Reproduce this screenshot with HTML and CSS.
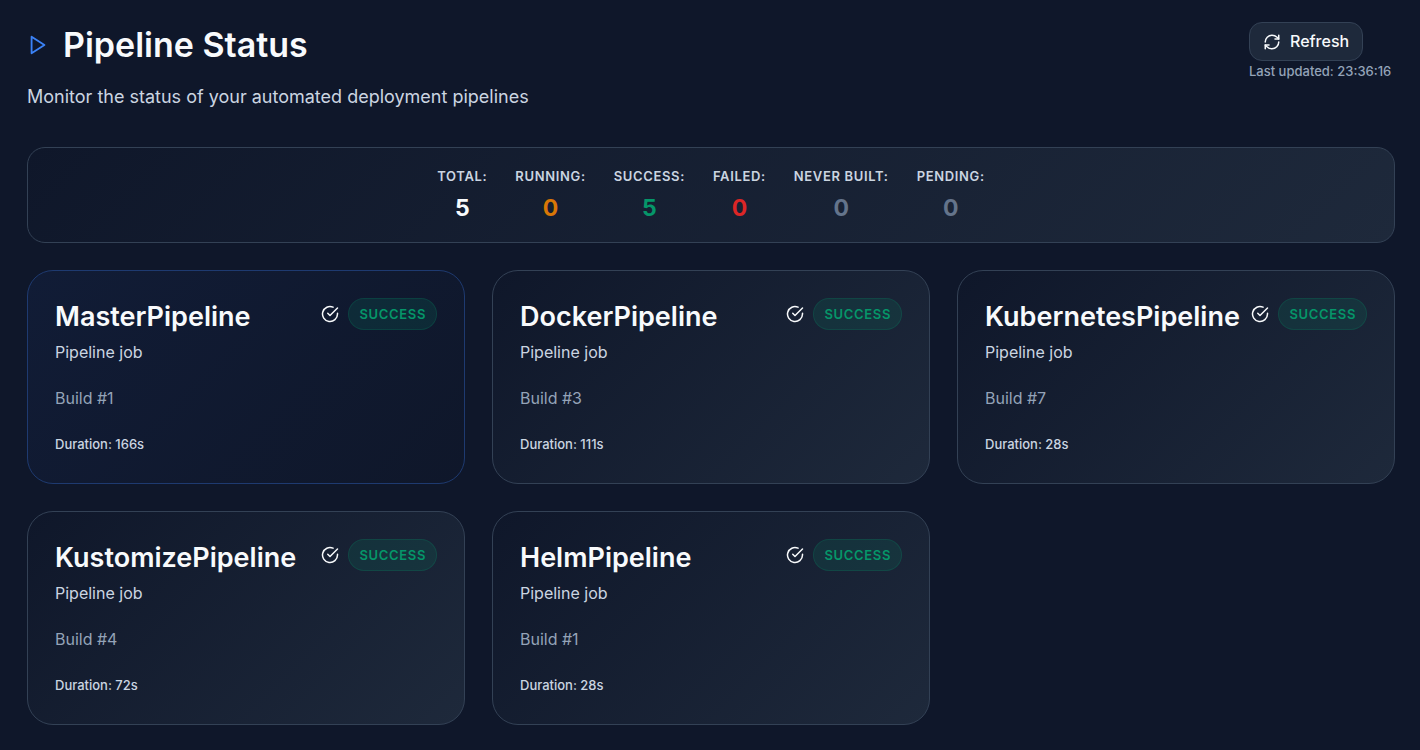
FILE: index.html
```html
<!DOCTYPE html>
<html lang="en">
<head>
<meta charset="utf-8">
<meta name="viewport" content="width=device-width, initial-scale=1">
<title>Pipeline Status</title>
<link rel="stylesheet" href="styles.css">
</head>
<body>
<svg class="sprite" aria-hidden="true">
  <symbol id="check" viewBox="0 0 24 24"><path d="M22 11.08V12a10 10 0 1 1-5.93-9.14"/><path d="m9 11 3 3L22 4"/></symbol>
</svg>
<main class="page">
  <header class="header">
    <div class="heading">
      <h1 class="title">
        <svg class="title-icon" viewBox="0 0 24 24" aria-hidden="true"><path d="M5 3l14 9-14 9z"/></svg>
        Pipeline Status
      </h1>
      <p class="subtitle">Monitor the status of your automated deployment pipelines</p>
    </div>
    <div class="actions">
      <button class="refresh" type="button">
        <svg class="icon" viewBox="0 0 24 24" aria-hidden="true"><path d="M3 12a9 9 0 0 1 9-9 9.75 9.75 0 0 1 6.74 2.74L21 8"/><path d="M21 3v5h-5"/><path d="M21 12a9 9 0 0 1-9 9 9.75 9.75 0 0 1-6.74-2.74L3 16"/><path d="M8 16H3v5"/></svg>
        Refresh
      </button>
      <span class="updated">Last updated: 23:36:16</span>
    </div>
  </header>

  <dl class="stats">
    <div class="stat"><dt class="stat-label">Total:</dt><dd class="stat-value">5</dd></div>
    <div class="stat"><dt class="stat-label">Running:</dt><dd class="stat-value running">0</dd></div>
    <div class="stat"><dt class="stat-label">Success:</dt><dd class="stat-value success">5</dd></div>
    <div class="stat"><dt class="stat-label">Failed:</dt><dd class="stat-value failed">0</dd></div>
    <div class="stat"><dt class="stat-label">Never built:</dt><dd class="stat-value muted">0</dd></div>
    <div class="stat"><dt class="stat-label">Pending:</dt><dd class="stat-value muted">0</dd></div>
  </dl>

  <section class="grid" aria-label="Pipelines">
    <article class="card master">
      <div class="card-head">
        <div><h2 class="name">MasterPipeline</h2><p class="kind">Pipeline job</p></div>
        <div class="status"><svg class="icon" aria-hidden="true"><use href="#check"/></svg><span class="badge">Success</span></div>
      </div>
      <p class="build">Build #1</p>
      <p class="duration">Duration: 166s</p>
    </article>
    <article class="card">
      <div class="card-head">
        <div><h2 class="name">DockerPipeline</h2><p class="kind">Pipeline job</p></div>
        <div class="status"><svg class="icon" aria-hidden="true"><use href="#check"/></svg><span class="badge">Success</span></div>
      </div>
      <p class="build">Build #3</p>
      <p class="duration">Duration: 111s</p>
    </article>
    <article class="card">
      <div class="card-head">
        <div><h2 class="name">KubernetesPipeline</h2><p class="kind">Pipeline job</p></div>
        <div class="status"><svg class="icon" aria-hidden="true"><use href="#check"/></svg><span class="badge">Success</span></div>
      </div>
      <p class="build">Build #7</p>
      <p class="duration">Duration: 28s</p>
    </article>
    <article class="card">
      <div class="card-head">
        <div><h2 class="name">KustomizePipeline</h2><p class="kind">Pipeline job</p></div>
        <div class="status"><svg class="icon" aria-hidden="true"><use href="#check"/></svg><span class="badge">Success</span></div>
      </div>
      <p class="build">Build #4</p>
      <p class="duration">Duration: 72s</p>
    </article>
    <article class="card">
      <div class="card-head">
        <div><h2 class="name">HelmPipeline</h2><p class="kind">Pipeline job</p></div>
        <div class="status"><svg class="icon" aria-hidden="true"><use href="#check"/></svg><span class="badge">Success</span></div>
      </div>
      <p class="build">Build #1</p>
      <p class="duration">Duration: 28s</p>
    </article>
  </section>
</main>
</body>
</html>
```
FILE: styles.css
```css
* { box-sizing: border-box; margin: 0; padding: 0; }

body {
  background: #0f172a;
  color: #f8fafc;
  font-family: Inter, sans-serif;
  font-size: 16px;
  line-height: 24px;
}

.sprite { display: none; }

.page { padding: 22px 25px 26px 27px; }

.header {
  display: flex;
  justify-content: space-between;
  align-items: flex-start;
  margin-bottom: 37px;
}

.title {
  display: flex;
  align-items: center;
  gap: 14px;
  font-size: 34px;
  font-weight: 600;
  line-height: 46px;
}

.title-icon, .icon {
  flex: none;
  fill: none;
  stroke: currentColor;
  stroke-width: 2;
  stroke-linecap: round;
  stroke-linejoin: round;
}

.title-icon { width: 22px; height: 22px; color: #3b82f6; }
.icon { width: 18px; height: 18px; }

.subtitle {
  margin-top: 15px;
  color: #cbd5e1;
  font-size: 18px;
  line-height: 27px;
}

.actions { display: flex; flex-direction: column; align-items: flex-start; min-width: 146px; }

.refresh {
  display: flex;
  align-items: center;
  gap: 9px;
  padding: 7px 13px;
  border: 1px solid #334155;
  border-radius: 13px;
  background: #1e293b;
  color: #f8fafc;
  font: 500 16px/23px Inter, sans-serif;
  cursor: pointer;
}

.updated { color: #94a3b8; font-size: 13px; font-weight: 500; line-height: 20px; }

.stats {
  display: flex;
  flex-wrap: wrap;
  justify-content: center;
  gap: 28px;
  padding: 17px 26px;
  margin-bottom: 27px;
  border: 1px solid #334155;
  border-radius: 18px;
  background: linear-gradient(135deg, #0f172a, #1e293b);
}

.stat { text-align: center; }

.stat-label {
  color: #cbd5e1;
  font-size: 13px;
  font-weight: 600;
  line-height: 22px;
  letter-spacing: 0.05em;
  text-transform: uppercase;
  margin-bottom: 5px;
}

.stat-value { font-size: 23px; font-weight: 700; line-height: 33px; }
.running { color: #d97706; }
.success { color: #059669; }
.failed { color: #dc2626; }
.muted { color: #64748b; }

.grid { display: grid; grid-template-columns: repeat(3, 1fr); gap: 27px; }

.card {
  padding: 27px;
  border: 1px solid #334155;
  border-radius: 26px;
  background: linear-gradient(135deg, #0f172a, #1e293b);
}

.card.master {
  border-color: #1e3a70;
  background: linear-gradient(135deg, #111c36, #0f172a);
}

.card-head { display: flex; justify-content: space-between; align-items: flex-start; margin-bottom: 22px; }

.name { font-size: 27px; font-weight: 600; line-height: 38px; }
.kind { color: #cbd5e1; font-size: 16px; line-height: 24px; margin-top: 4px; }

.status { display: flex; align-items: center; gap: 9px; }

.badge {
  padding: 4px 10px;
  border: 1px solid rgba(5, 150, 105, 0.2);
  border-radius: 16px;
  background: rgba(5, 150, 105, 0.15);
  color: #059669;
  font-size: 13px;
  font-weight: 600;
  line-height: 22px;
  letter-spacing: 0.05em;
  text-transform: uppercase;
}

.build { color: #94a3b8; font-size: 16px; line-height: 24px; margin-bottom: 22px; }
.duration { color: #cbd5e1; font-size: 13px; font-weight: 500; line-height: 24px; }
```
